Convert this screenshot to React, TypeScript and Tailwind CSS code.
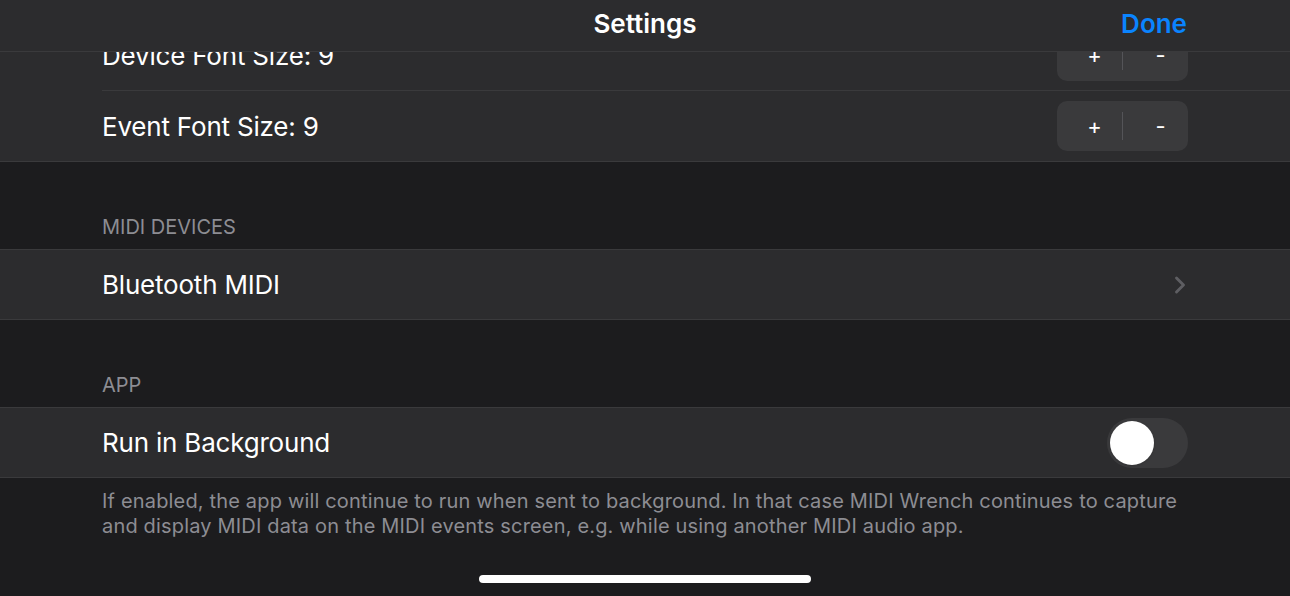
import { ChevronRight } from "lucide-react";

const font = { fontFamily: "Inter, 'Liberation Sans', sans-serif" };

function Stepper() {
  return (
    <div className="flex h-[50px] w-[131px] items-center rounded-[10px] bg-[#3a3a3c] text-[22px] text-white">
      <span className="flex flex-1 justify-center pl-[10px]">+</span>
      <span className="h-[28px] w-px bg-[#545458]" />
      <span className="flex flex-1 justify-center pl-[10px]">-</span>
    </div>
  );
}

function Row({ label, right, divider, h = "h-[70px]" }: { label: string; right?: React.ReactNode; divider?: boolean; h?: string }) {
  return (
    <div className={`flex items-center bg-[#2c2c2e] pl-[102px] ${h}`}>
      <div
        className={`flex h-full flex-1 items-center pr-[102px] ${divider ? "border-b border-[#3a3a3c]" : ""}`}
      >
        <span className="flex-1 text-[26px] tracking-[-0.2px] text-white">{label}</span>
        {right}
      </div>
    </div>
  );
}

function Header({ title }: { title: string }) {
  return (
    <div className="flex h-[87px] items-end px-[102px] pb-[7px] text-[20px] uppercase text-[#8d8d93]">
      {title}
    </div>
  );
}

export default function App() {
  return (
    <div className="relative h-[596px] w-[1290px] overflow-hidden bg-[#1c1c1e]" style={font}>
      <div className="absolute inset-x-0 top-0 z-10 flex h-[52px] items-center justify-center border-b border-[#3a3a3c] bg-[#2c2c2e] pb-[4px]">
        <span className="text-[26px] font-semibold text-white">Settings</span>
        <span className="absolute right-[103px] text-[26px] font-semibold text-[#0a84ff]">Done</span>
      </div>

      <div className="pt-[21px]">
        <div className="border-b border-[#3a3a3c]">
          <Row label="Device Font Size: 9" right={<Stepper />} divider />
          <Row label="Event Font Size: 9" right={<Stepper />} />
        </div>

        <Header title="MIDI Devices" />
        <div className="border-y border-[#3a3a3c]">
          <Row
            label="Bluetooth MIDI"
            h="h-[69px]"
            right={<ChevronRight className="mr-[-6px] h-[28px] w-[28px] text-[#5e5e62]" strokeWidth={2.5} />}
          />
        </div>

        <Header title="App" />
        <div className="border-y border-[#3a3a3c]">
          <Row
            label="Run in Background"
            h="h-[69px]"
            right={
              <div className="flex h-[50px] w-[81px] items-center rounded-full bg-[#3a3a3c] px-[3px]">
                <div className="h-[44px] w-[44px] rounded-full bg-white shadow" />
              </div>
            }
          />
        </div>

        <p className="px-[102px] pt-[11px] text-[20px] leading-[25px] tracking-[0.17px] text-[#8d8d93]">
          If enabled, the app will continue to run when sent to background. In that case MIDI Wrench continues to
          capture and display MIDI data on the MIDI events screen, e.g. while using another MIDI audio app.
        </p>
      </div>

      <div className="absolute bottom-[13px] left-1/2 h-[8px] w-[332px] -translate-x-1/2 rounded-full bg-white" />
    </div>
  );
}
